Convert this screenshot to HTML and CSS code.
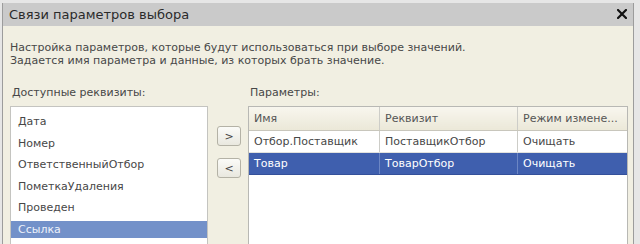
FILE: index.html
```html
<!DOCTYPE html>
<html lang="ru">
<head>
    <meta charset="UTF-8">
    <title>Связи параметров выбора</title>
    <link rel="stylesheet" href="styles.css">
</head>
<body>
    <div class="window">
        <div class="titlebar">
            <span class="title">Связи параметров выбора</span>
            <span class="close">
                <svg width="10" height="10" viewBox="0 0 10 10"><path d="M1 1 L9 9 M9 1 L1 9" stroke="#111" stroke-width="2.2" stroke-linecap="square"/></svg>
            </span>
        </div>
        <div class="content">
            <p class="hint">Настройка параметров, которые будут использоваться при выборе значений.<br>Задается имя параметра и данные, из которых брать значение.</p>
            <div class="panes">
                <div class="pane pane-left">
                    <div class="pane-label">Доступные реквизиты:</div>
                    <ul class="fields">
                        <li>Дата</li>
                        <li>Номер</li>
                        <li>ОтветственныйОтбор</li>
                        <li>ПометкаУдаления</li>
                        <li>Проведен</li>
                        <li class="selected">Ссылка</li>
                    </ul>
                </div>
                <div class="moves">
                    <button class="move-button">&gt;</button>
                    <button class="move-button">&lt;</button>
                </div>
                <div class="pane pane-right">
                    <div class="pane-label">Параметры:</div>
                    <div class="params">
                        <table class="params-table">
                            <thead>
                                <tr><th class="col-name">Имя</th><th class="col-attr">Реквизит</th><th class="col-mode">Режим измене...</th></tr>
                            </thead>
                            <tbody>
                                <tr><td>Отбор.Поставщик</td><td>ПоставщикОтбор</td><td>Очищать</td></tr>
                                <tr class="selected"><td>Товар</td><td>ТоварОтбор</td><td>Очищать</td></tr>
                            </tbody>
                        </table>
                    </div>
                </div>
            </div>
        </div>
    </div>
</body>
</html>
```

FILE: styles.css
```css
html, body {
    margin: 0;
    padding: 0;
    height: 244px;
    overflow: hidden;
}
body {
    padding-top: 3px;
    box-sizing: border-box;
    background-color: #e6e6e6;
    font-family: "DejaVu Sans", Verdana, sans-serif;
    font-size: 11px;
    color: #474747;
}
.window {
    margin: 0 6px 0 2px;
    height: 241px;
    background: #f1efe2;
    border-left: 1px solid #9c9c9c;
    border-right: 1px solid #9c9c9c;
}
.titlebar {
    height: 23px;
    background: #cacaca;
    display: flex;
    align-items: center;
    justify-content: space-between;
    padding: 0 6px 0 6px;
}
.title {
    font-size: 13px;
    color: #2a2a2a;
}
.close {
    display: flex;
    margin-top: -1px;
}
.content {
    padding: 15px 5px 0 7px;
}
.hint {
    margin: 0;
    line-height: 13px;
}
.panes {
    display: flex;
    margin-top: 19px;
}
.pane-label {
    line-height: 13px;
    padding-left: 2px;
    margin-bottom: 7px;
}
.pane-left {
    width: 198px;
}
.fields {
    list-style: none;
    margin: 0;
    padding: 6px 0 0 0;
    height: 132px;
    overflow: hidden;
    background: #fff;
    border: 1px solid #c4c4c0;
    border-bottom: none;
}
.fields li {
    height: 17px;
    line-height: 17px;
    margin-bottom: 4.6px;
    padding-left: 7px;
}
.fields li.selected {
    background: #7391c9;
    color: #eef2fa;
}
.moves {
    display: flex;
    flex-direction: column;
    gap: 12px;
    padding: 40px 7px 0 9px;
}
.move-button {
    width: 24px;
    height: 20px;
    padding: 0;
    border: 1px solid #b4b2a6;
    border-radius: 3px;
    background: linear-gradient(#fbfbf8, #e9e8df);
    font-family: "DejaVu Sans", sans-serif;
    font-size: 11px;
    color: #444;
}
.pane-right {
    flex: 1;
}
.params {
    height: 137px;
    overflow: hidden;
    background: #fff;
    border: 1px solid #b8b8b4;
    border-bottom: none;
}
.params-table {
    width: 100%;
    border-collapse: collapse;
    table-layout: fixed;
}
.params-table th {
    height: 23px;
    font-weight: normal;
    text-align: left;
    color: #555;
    background: linear-gradient(#f8f6ee, #ebe8d8);
    border-bottom: 1px solid #c8c6bc;
}
.params-table th, .params-table td {
    padding: 0 0 0 5px;
    border-right: 1px solid #cdcdc8;
    white-space: nowrap;
    overflow: hidden;
}
.params-table th:last-child, .params-table td:last-child {
    border-right: none;
}
.params-table td {
    height: 21px;
    border-bottom: 1px solid #e2e2de;
}
.col-name {
    width: 125px;
}
.col-attr {
    width: 132px;
}
.params-table tr.selected td {
    background: #3f5fae;
    color: #fff;
    border-right-color: #6c86c4;
    border-bottom-color: #34509a;
}
```
